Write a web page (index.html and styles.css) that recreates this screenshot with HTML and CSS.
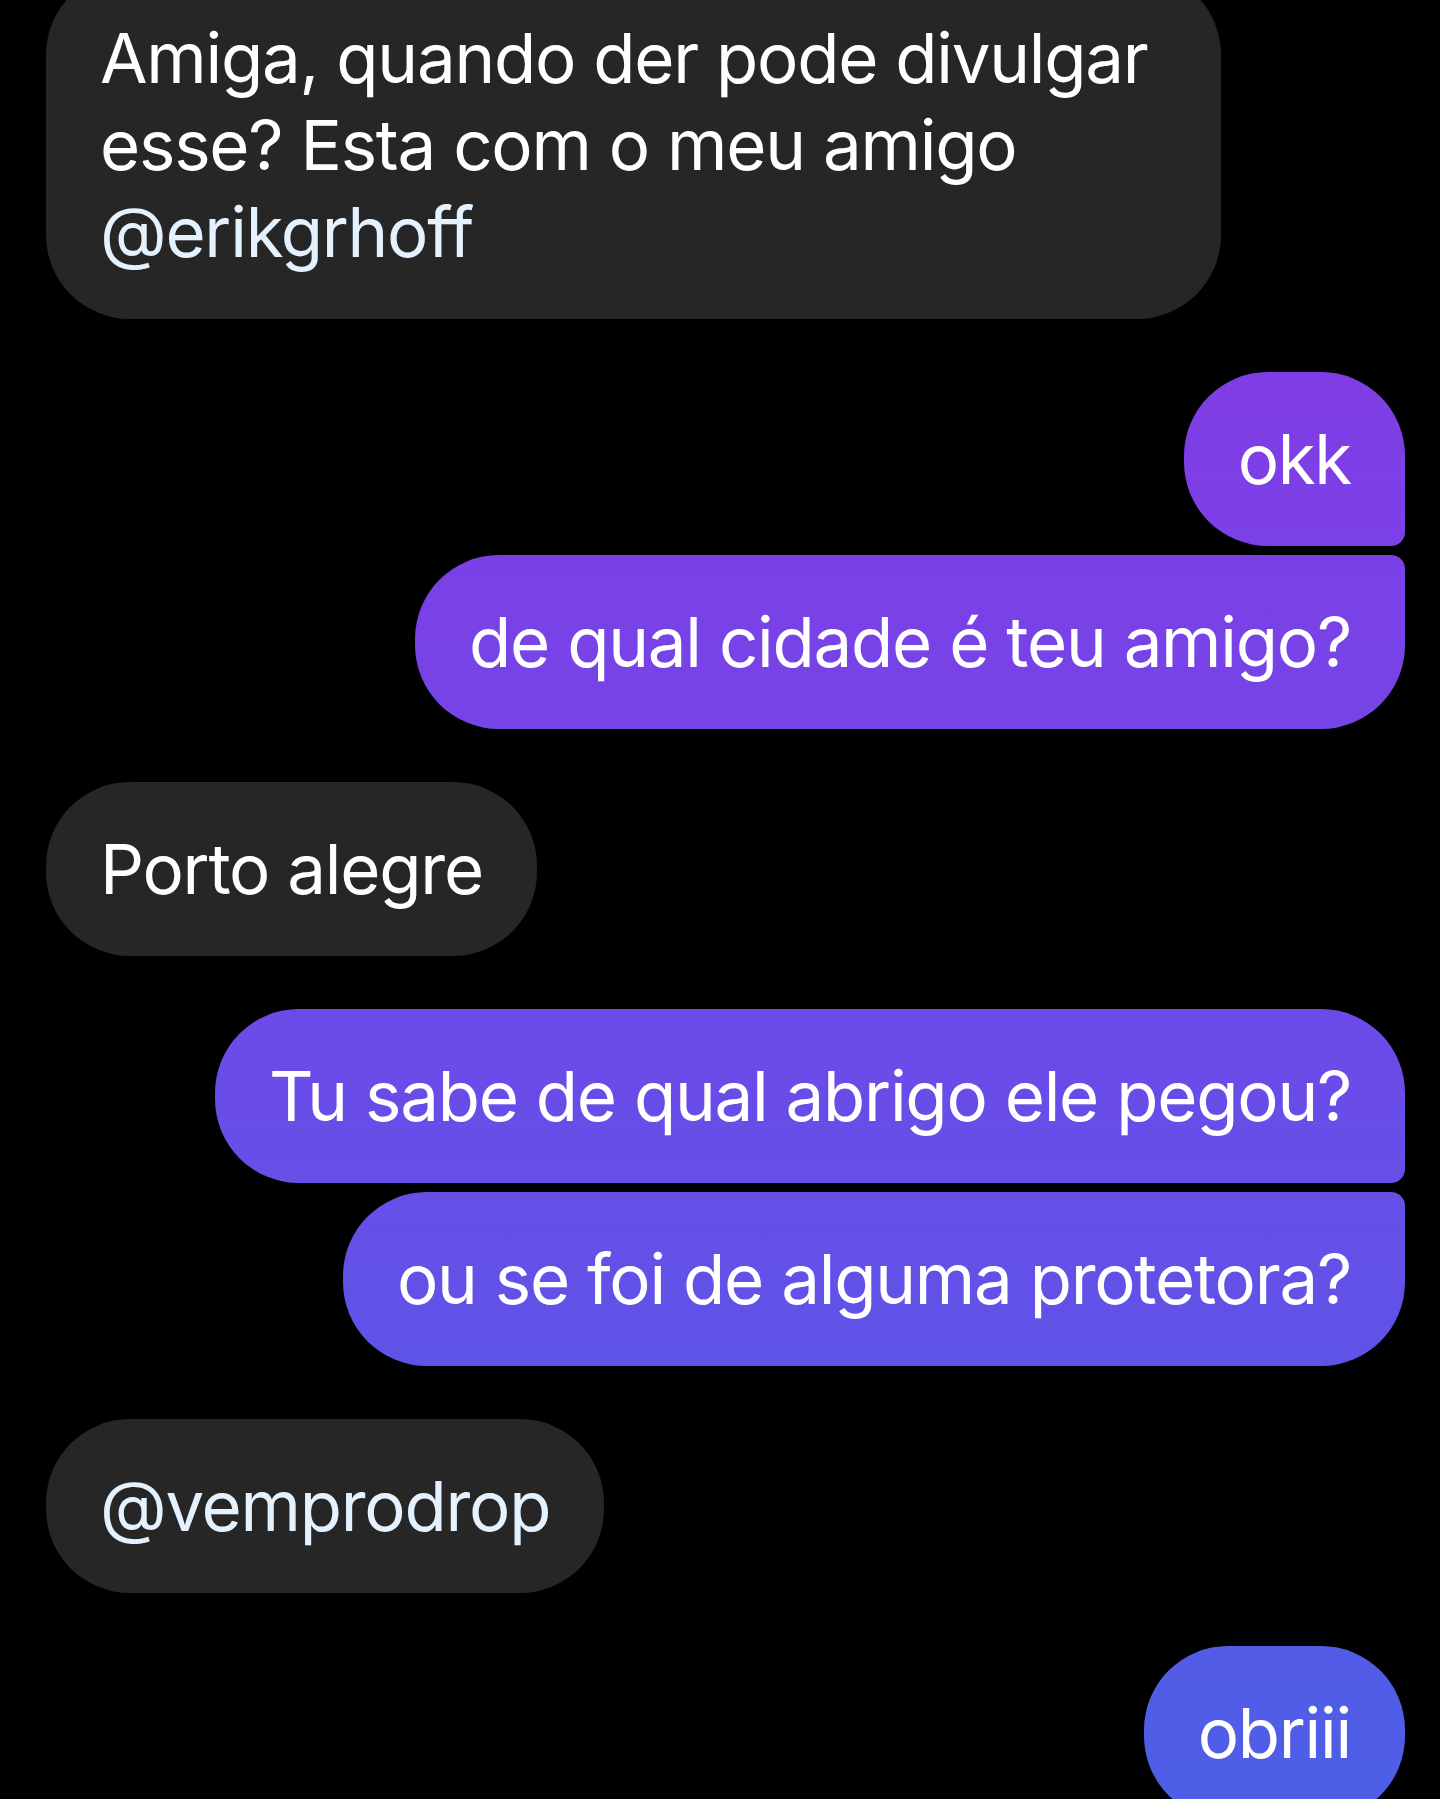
FILE: index.html
```html
<!DOCTYPE html>
<html lang="pt">
<head>
<meta charset="utf-8">
<title>Chat</title>
<link rel="stylesheet" href="styles.css">
</head>
<body>
<main class="thread">
  <div class="row in">
    <div class="bubble gray wide">Amiga, quando der pode divulgar<br>esse? Esta com o meu amigo<br><span class="mention">@erikgrhoff</span></div>
  </div>
  <div class="group out">
    <div class="row out"><div class="bubble purple first">okk</div></div>
    <div class="row out"><div class="bubble purple last">de qual cidade é teu amigo?</div></div>
  </div>
  <div class="row in">
    <div class="bubble gray">Porto alegre</div>
  </div>
  <div class="group out">
    <div class="row out"><div class="bubble purple first">Tu sabe de qual abrigo ele pegou?</div></div>
    <div class="row out"><div class="bubble purple last">ou se foi de alguma protetora?</div></div>
  </div>
  <div class="row in">
    <div class="bubble gray"><span class="mention">@vemprodrop</span></div>
  </div>
  <div class="row out">
    <div class="bubble purple">obriii</div>
  </div>
</main>
</body>
</html>
```
FILE: styles.css
```css
html, body {
  margin: 0;
  padding: 0;
  background: #000;
}
body {
  font-family: Inter, "Noto Sans", sans-serif;
  color: #fff;
  overflow: hidden;
  height: 1799px;
}
.thread {
  display: flex;
  flex-direction: column;
  gap: 53px;
  margin-top: -29px;
  padding: 0 35px 0 46px;
}
.group {
  display: flex;
  flex-direction: column;
  gap: 9px;
}
.row {
  display: flex;
}
.row.out {
  justify-content: flex-end;
}
.row.in {
  justify-content: flex-start;
}
.bubble {
  box-sizing: border-box;
  font-size: 69px;
  line-height: 87px;
  letter-spacing: -1.25px;
  padding: 43.5px 54px;
  border-radius: 84px;
  white-space: nowrap;
}
.gray {
  background: #262626;
}
.wide {
  width: 1175px;
}
.purple {
  background: linear-gradient(180deg, #8b36e4 0%, #7b40e6 30%, #6a4ce8 60%, #4d5fe6 100%);
  background-attachment: fixed;
}
.bubble.first {
  border-bottom-right-radius: 14px;
}
.bubble.last {
  border-top-right-radius: 14px;
}
.mention {
  color: #e4f2ff;
}
```
